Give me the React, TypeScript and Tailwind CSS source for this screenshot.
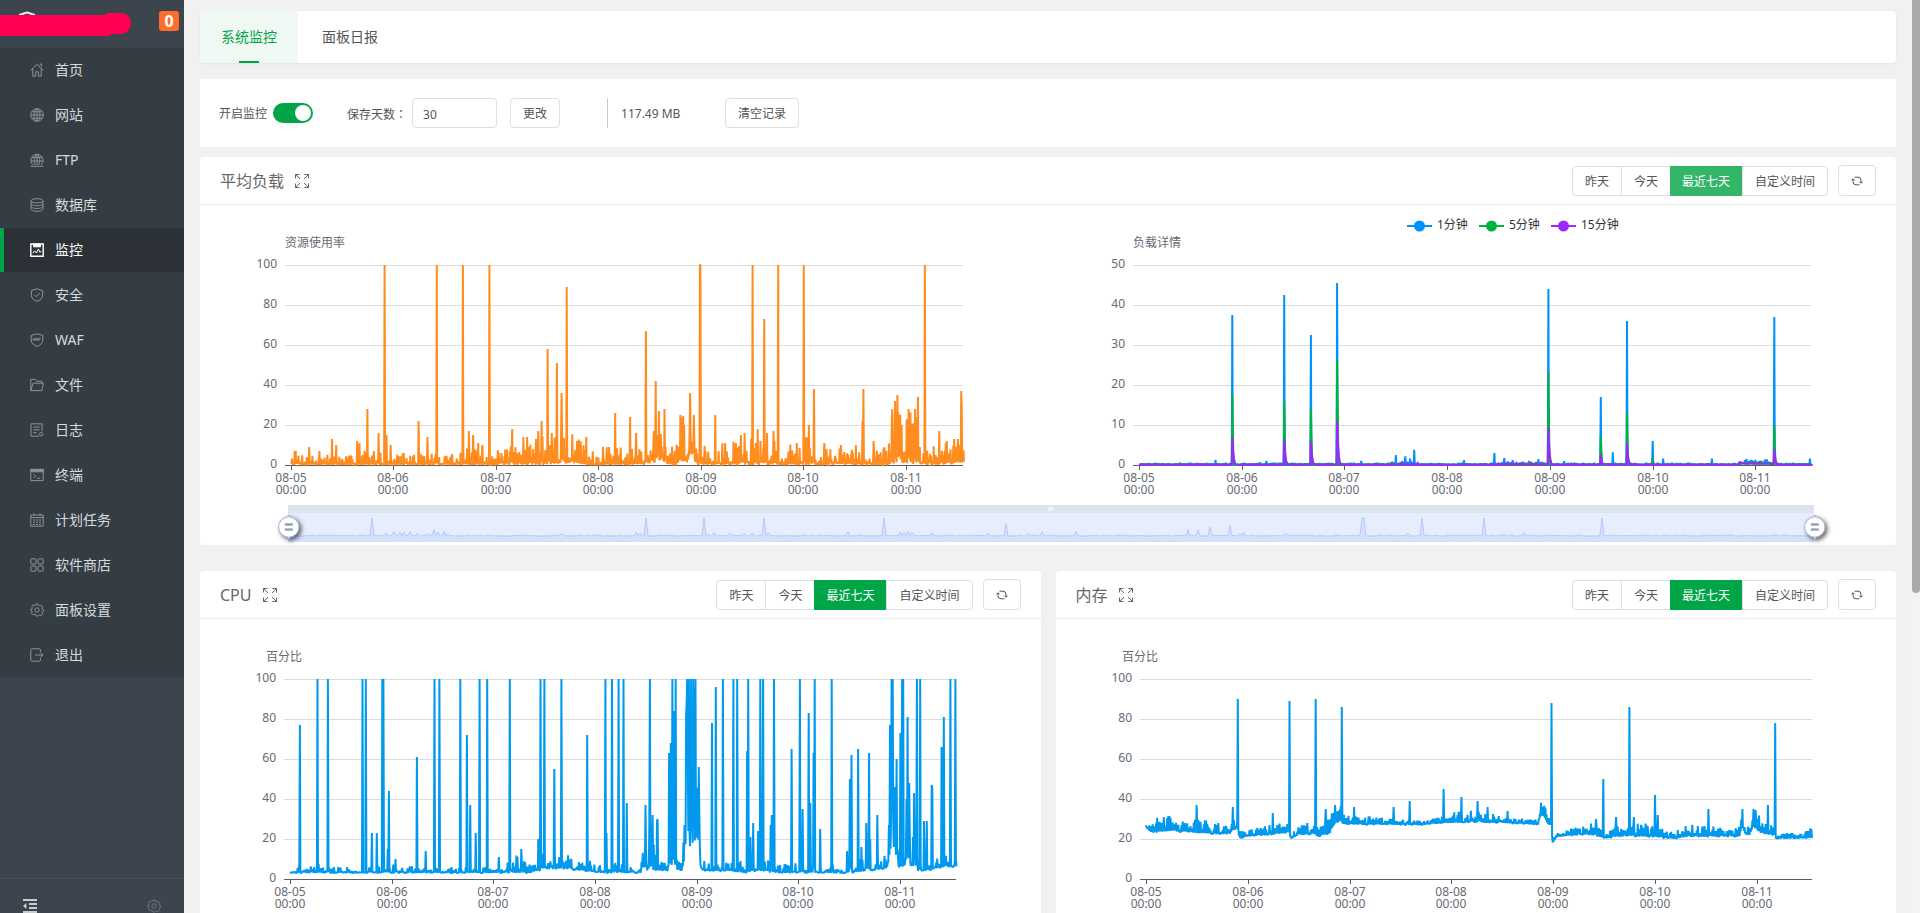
import { useEffect, useRef, useState } from "react";
import type { ReactNode } from "react";

type Point = [number, number];
type Band = [number, number, number];

/* ---------- sidebar ---------- */

const GEAR =
  "M5.9 1h2.2l.4 1.5 1.2.5 1.4-.8 1.5 1.6-.8 1.4.5 1.1 1.2.4v1.6l-1.2.4-.5 1.2.8 1.4-1.5 1.5-1.4-.8-1.2.5L8.1 13H5.9l-.4-1.5-1.2-.5-1.4.8-1.5-1.5.8-1.4-.5-1.2L.7 7.5V6.3l1.2-.4.5-1.1-.8-1.4 1.5-1.6 1.2.8 1.2-.5z";

const ICONS: Record<string, ReactNode> = {
  home: <path d="M.8 7.2 7 1.4l6.2 5.8M2.8 6v7.2h2.8V8.8h2.8v4.4h2.8V6M9.6 1h1.8v2.6" />,
  globe: (
    <>
      <circle cx="7" cy="7" r="6.3" />
      <ellipse cx="7" cy="7" rx="3" ry="6.3" />
      <path d="M7 .7v12.6M.7 7h12.6M1.6 3.8h10.8M1.6 10.2h10.8" />
    </>
  ),
  ftp: (
    <>
      <path d="M3 12A6.100 6.100 0 1 1 11 12M5.400 12C3.400 8.600 3.800 3.600 7 1c3.200 2.600 3.600 7.600 1.600 11M7 1v11M.8 8h12.400M2 4.500h10" />
      <path d="M.5 13.300h13" />
    </>
  ),
  database: (
    <>
      <ellipse cx="7" cy="2.8" rx="6" ry="2.1" />
      <path d="M1 2.8v8.4c0 1.200 2.700 2.100 6 2.100s6-.9 6-2.100V2.800M1 5.600c0 1.200 2.700 2.100 6 2.100s6-.9 6-2.100M1 8.400c0 1.200 2.700 2.100 6 2.100s6-.9 6-2.100" />
    </>
  ),
  monitor: (
    <>
      <path d="M.8 1h12.4v12.200H.8z" strokeWidth="1.4" />
      <path d="M3.500 1h7v2.800h-7z" fill="currentColor" />
      <path d="m2.600 10.200 2-2.400 1.800 2.200 2-4 1.600 3.400 1.600-1.600" />
    </>
  ),
  shield: (
    <>
      <path d="m7 .8 5.600 1.800v4.600c0 3-2.400 5-5.600 6.200-3.200-1.200-5.600-3.200-5.600-6.200V2.600z" />
      <path d="m4.400 6.800 2 2 3.400-3.600" />
    </>
  ),
  waf: (
    <>
      <path d="m7 .8 5.800 1.600v4.800c0 3-2.600 5-5.800 6.200C3.800 12.200 1.200 10.200 1.200 7.200V2.400z" />
      <path d="m3 5 .7 2.600.7-2 .7 2L5.800 5m.4 2.600L7 5l.9 2.600M6.500 6.900h1M8.800 7.800V5h2M8.800 6.400h1.600" strokeWidth=".8" />
    </>
  ),
  folder: <path d="M.8 12.600V1.400h4.400l1.400 1.800h5.200v2M.8 12.600 3 5.200h10.400l-1.600 7.400z" />,
  log: (
    <>
      <path d="M9 13.200H1V.8h11v7.400M3.400 4h6.200M3.400 6.800h6.200M3.400 9.600h3.200" />
      <circle cx="11.2" cy="11.2" r="1.700" />
    </>
  ),
  terminal: (
    <>
      <path d="M.8 1.400h12.400v11.200H.8z" />
      <path d="M.8 1.400h12.400v2.400H.8z" fill="currentColor" />
      <path d="m3.600 6 2 2-2 2M7 10.200h3.200" />
    </>
  ),
  calendar: (
    <>
      <path d="M.8 2h12.400v11.200H.8zM.8 4.600h12.400M4 .4v2.400M10 .4v2.400" />
      <path d="M3 7h8M3 9.200h8M3 11.400h8" strokeDasharray="2 1" />
    </>
  ),
  apps: (
    <>
      <rect x=".8" y=".8" width="5.200" height="5.200" rx="1" />
      <rect x="8" y=".8" width="5.200" height="5.200" rx="1" />
      <rect x=".8" y="8" width="5.200" height="5.200" rx="1" />
      <rect x="8" y="8" width="5.200" height="5.200" rx="1" />
    </>
  ),
  gear: (
    <>
      <path d={GEAR} />
      <circle cx="7" cy="7" r="2.200" />
    </>
  ),
  exit: <path d="M10.400 4V1.800q0-1-1-1H1.800q-1 0-1 1v10.400q0 1 1 1h7.600q1 0 1-1V10M5 7h8M10.600 4.600 13 7l-2.400 2.400" />,
};

const MENU = [
  { icon: "home", label: "首页" },
  { icon: "globe", label: "网站" },
  { icon: "ftp", label: "FTP" },
  { icon: "database", label: "数据库" },
  { icon: "monitor", label: "监控" },
  { icon: "shield", label: "安全" },
  { icon: "waf", label: "WAF" },
  { icon: "folder", label: "文件" },
  { icon: "log", label: "日志" },
  { icon: "terminal", label: "终端" },
  { icon: "calendar", label: "计划任务" },
  { icon: "apps", label: "软件商店" },
  { icon: "gear", label: "面板设置" },
  { icon: "exit", label: "退出" },
];

function MenuIcon({ name }: { name: string }) {
  return (
    <svg viewBox="0 0 14 14" className="size-3.5 shrink-0" fill="none" stroke="currentColor" strokeWidth="1">
      {ICONS[name]}
    </svg>
  );
}

function Sidebar() {
  return (
    <aside className="flex w-[184px] shrink-0 flex-col bg-[#3c444d]">
      <div className="flex h-12 items-start justify-between pr-[5px]">
        <svg width="140" height="48" viewBox="0 0 140 48">
          <path d="M19 15c3-.5 5-2 8-2.500 3 .5 5 2 8 2.500" fill="none" stroke="#e8eaec" strokeWidth="2" />
          <path d="M0 15h104l4-2h13c6 0 10 5 10 10s-4 11-10 11h-9l-3 2H0z" fill="#ff0052" />
        </svg>
        <span className="mt-[11px] flex size-5 items-center justify-center rounded-[3px] bg-[#ff6c2c] text-base font-bold text-white">
          0
        </span>
      </div>
      <nav className="flex flex-col gap-px bg-[#353d44]">
        {MENU.map((item) => {
          const active = item.label === "监控";
          return (
            <a
              key={item.label}
              href="#"
              className={
                active
                  ? "flex h-11 items-center gap-[11px] border-l-4 border-[#00a547] bg-[#2c3138] pl-[26px] text-sm text-white"
                  : "flex h-11 items-center gap-[11px] border-l-4 border-transparent pl-[26px] text-sm text-[#d8d9da]"
              }
            >
              <span className={active ? "text-white" : "text-[#8f9396]"}>
                <MenuIcon name={item.icon} />
              </span>
              {item.label}
            </a>
          );
        })}
      </nav>
      <div className="mt-auto flex h-[35px] items-end justify-between border-t border-[#454e57] px-[23px]">
        <button type="button" aria-label="收起菜单" className="text-[#c9ccce]">
          <svg viewBox="0 0 14 14" className="block size-3.5" fill="currentColor">
            <path d="M0 0h14v2H0zM6 4h8v2H6zM6 8h8v2H6zM0 12h14v2H0zM3.400 4v6L0 7z" />
          </svg>
        </button>
        <button type="button" aria-label="设置" className="text-[#6f767c]">
          <MenuIcon name="gear" />
        </button>
      </div>
    </aside>
  );
}

/* ---------- data ---------- */

function seeded(seed: number) {
  let s = seed;
  return () => {
    s = (s * 1664525 + 1013904223) % 4294967296;
    return s / 4294967296;
  };
}

// Noise swinging between the low and high edge of the band, with single peaks on top.
function buildSeries(length: number, bands: Band[], peaks: Point[], seed: number, skew = 1.8) {
  const rand = seeded(seed);
  const out: number[] = [];
  let b = 0;
  for (let i = 0; i <= length; i++) {
    while (b < bands.length - 2 && i > bands[b + 1][0]) b++;
    const [x0, lo0, hi0] = bands[b];
    const [x1, lo1, hi1] = bands[b + 1];
    const t = Math.min(1, Math.max(0, (i - x0) / (x1 - x0)));
    const lo = lo0 + (lo1 - lo0) * t;
    const hi = hi0 + (hi1 - hi0) * t;
    const r = rand();
    out.push(lo + (hi - lo) * (i % 2 ? r * 0.15 : Math.pow(r, skew)));
  }
  peaks.forEach(([i, v]) => {
    out[i] = v;
  });
  return out;
}

const USAGE = buildSeries(
  1445,
  [[0, 0, 8], [40, 0, 6], [130, 0, 5], [140, 0, 9], [220, 0, 6], [330, 0, 7], [400, 0, 9], [440, 0, 7], [490, 0, 12], [530, 0, 16], [600, 1, 17], [640, 0, 9], [750, 0, 9], [775, 1, 13], [790, 2, 20], [815, 0, 8], [830, 0, 18], [836, 2, 30], [850, 1, 22], [862, 4, 30], [872, 0, 12], [960, 0, 12], [1020, 0, 15], [1060, 0, 9], [1110, 0, 17], [1125, 0, 9], [1270, 0, 8], [1285, 0, 14], [1291, 0, 34], [1306, 2, 34], [1314, 1, 18], [1325, 0, 26], [1345, 1, 32], [1356, 0, 7], [1380, 0, 10], [1445, 1, 15]],
  [[8, 7], [39, 9], [61, 7], [88, 13], [97, 10], [142, 12], [147, 11], [164, 28], [188, 16], [201, 100], [205, 15], [214, 10], [274, 22], [293, 14], [313, 100], [369, 100], [382, 17], [391, 15], [402, 11], [411, 10], [426, 100], [475, 18], [499, 14], [507, 14], [531, 17], [538, 22], [551, 58], [571, 51], [581, 36], [592, 89], [614, 12], [634, 14], [683, 9], [696, 26], [728, 24], [741, 16], [762, 67], [779, 17], [783, 42], [790, 27], [802, 28], [836, 25], [844, 20], [857, 36], [865, 25], [878, 100], [879, 100], [911, 25], [932, 11], [955, 11], [966, 15], [974, 16], [991, 100], [1002, 18], [1016, 73], [1022, 16], [1036, 17], [1046, 100], [1101, 100], [1112, 20], [1123, 38], [1145, 11], [1181, 10], [1213, 10], [1227, 22], [1229, 38], [1251, 12], [1291, 28], [1297, 32], [1302, 35], [1311, 20], [1326, 28], [1340, 28], [1346, 34], [1361, 100], [1392, 17], [1408, 12], [1432, 13], [1439, 37], [1440, 30]],
  7
);

const LOAD_PEAKS: [number, number, number, number][] = [
  [178, 37.5, 17.5, 7], [277, 42.5, 16, 6.5], [328, 32.5, 14, 6], [378, 45.5, 26, 11], [781, 44, 23, 9.5], [881, 17, 7, 2.5], [931, 36, 13, 5.5], [980, 6, 1.5, 0.5], [1212, 37, 10, 4],
];
const LOAD_BUMPS: Point[] = [
  [146, 1.3], [243, 1], [424, 1], [490, 2.5], [508, 2.2], [517, 1.6], [525, 3.8], [620, 1.2], [678, 3], [697, 1.7], [713, 1.2], [744, 1], [762, 1.5], [811, 1], [904, 3.2], [1000, 1.6], [1093, 1.6], [1159, 1.5], [1198, 1.4], [1280, 1.6],
];
const LOAD_BANDS: Band[] = [
  [0, 0, 0.6], [470, 0, 0.6], [480, 0, 1], [530, 0, 1], [540, 0, 0.5], [680, 0, 0.6], [700, 0.1, 0.9], [770, 0.1, 1], [790, 0, 0.6], [1140, 0, 0.6], [1150, 0.3, 1.3], [1200, 0.3, 1.4], [1220, 0, 0.6], [1284, 0, 0.7],
];

const LOAD_1 = buildSeries(1284, LOAD_BANDS, [...LOAD_BUMPS, ...LOAD_PEAKS.map((p): Point => [p[0], p[1]])], 11);
const LOAD_5 = buildSeries(
  1284,
  LOAD_BANDS.map(([i, lo, hi]): Band => [i, lo, hi * 0.8]),
  LOAD_PEAKS.flatMap((p): Point[] => [[p[0], p[2]], [p[0] + 1, p[2] * 0.5], [p[0] + 2, p[2] * 0.2]]),
  12
);
const LOAD_15 = buildSeries(
  1284,
  LOAD_BANDS.map(([i, lo, hi]): Band => [i, lo, hi * 0.6]),
  LOAD_PEAKS.flatMap((p): Point[] => [0, 1, 2, 3, 4, 5].map((k): Point => [p[0] + k, p[3] * Math.pow(0.62, k)])),
  13
);

const CPU = buildSeries(
  1214,
  [[0, 3, 6], [50, 3, 8], [100, 3, 6], [150, 3, 6], [190, 3, 8], [230, 3, 6], [390, 3, 6], [398, 3, 12], [425, 3, 12], [435, 3, 8], [450, 4, 13], [470, 5, 14], [500, 5, 15], [530, 4, 10], [570, 3, 9], [638, 3, 8], [642, 4, 30], [660, 4, 30], [668, 4, 9], [688, 4, 9], [690, 5, 70], [702, 5, 85], [704, 4, 14], [714, 4, 12], [717, 8, 50], [722, 15, 100], [741, 15, 100], [746, 5, 30], [750, 4, 10], [800, 4, 8], [830, 3, 10], [860, 4, 10], [880, 3, 12], [900, 3, 8], [940, 3, 8], [1010, 3, 7], [1015, 3, 25], [1023, 3, 20], [1026, 3, 8], [1048, 4, 12], [1054, 4, 16], [1058, 4, 9], [1088, 5, 13], [1092, 12, 60], [1105, 10, 50], [1108, 6, 12], [1120, 6, 14], [1122, 8, 50], [1140, 4, 40], [1143, 4, 9], [1160, 4, 9], [1190, 6, 12], [1214, 6, 12]],
  [[18, 77], [50, 100], [69, 100], [132, 100], [138, 100], [149, 23], [158, 23], [168, 100], [170, 100], [178, 15], [180, 44], [192, 10], [231, 61], [247, 14], [263, 100], [272, 100], [310, 100], [322, 72], [328, 37], [338, 23], [345, 100], [359, 100], [380, 11], [400, 100], [421, 15], [452, 20], [456, 100], [463, 100], [481, 55], [494, 100], [541, 72], [574, 100], [576, 23], [586, 100], [598, 100], [607, 100], [613, 38], [647, 37], [655, 100], [660, 32], [668, 29], [669, 30], [690, 63], [693, 68], [696, 100], [699, 84], [702, 100], [721, 82], [723, 100], [726, 100], [730, 100], [734, 100], [738, 100], [745, 33], [768, 78], [775, 96], [788, 100], [807, 100], [814, 100], [832, 64], [834, 100], [838, 21], [843, 28], [852, 24], [856, 100], [861, 100], [875, 27], [877, 32], [881, 100], [913, 65], [928, 100], [933, 35], [944, 83], [947, 38], [953, 63], [955, 100], [965, 25], [986, 100], [1019, 50], [1022, 62], [1034, 65], [1040, 16], [1049, 28], [1054, 63], [1056, 20], [1069, 32], [1092, 77], [1095, 100], [1097, 100], [1101, 46], [1104, 60], [1111, 73], [1114, 100], [1116, 100], [1122, 40], [1124, 81], [1127, 48], [1136, 43], [1141, 100], [1147, 100], [1154, 29], [1159, 29], [1168, 47], [1169, 45], [1186, 66], [1190, 81], [1202, 100], [1211, 100]],
  21
);

const MEMORY = buildSeries(
  1199,
  [[0, 26, 29], [10, 23, 27], [20, 23, 31], [45, 24, 32], [60, 23, 30], [150, 22, 29], [160, 25, 33], [165, 24, 30], [168, 20, 24], [180, 21, 24], [230, 22, 28], [257, 23, 29], [260, 20, 22], [275, 22, 27], [304, 22, 29], [310, 21, 25], [330, 22, 32], [340, 28, 35], [350, 28, 37], [360, 27, 32], [420, 27, 31], [500, 27, 29], [540, 28, 33], [600, 28, 35], [640, 28, 31], [705, 27, 30], [709, 31, 39], [718, 30, 38], [722, 27, 31], [728, 27, 30], [731, 18, 20], [738, 21, 23], [780, 22, 27], [800, 22, 28], [825, 20, 24], [850, 21, 27], [900, 21, 28], [950, 20, 23], [970, 21, 28], [1060, 21, 26], [1067, 21, 28], [1072, 26, 36], [1078, 22, 28], [1085, 22, 27], [1092, 26, 36], [1100, 24, 33], [1110, 22, 30], [1130, 22, 27], [1133, 20, 22], [1199, 20, 26]],
  [[32, 31], [91, 37], [156, 36], [165, 90], [228, 33], [258, 89], [305, 90], [323, 35], [340, 37], [352, 86], [374, 36], [445, 36], [474, 39], [535, 45], [567, 41], [596, 39], [614, 36], [650, 34], [729, 88], [809, 30], [822, 50], [845, 31], [869, 86], [877, 31], [915, 42], [920, 32], [1011, 35], [1072, 35], [1092, 35], [1118, 37], [1131, 78]],
  31,
  0.9
);

const OVERVIEW = buildSeries(
  763,
  [[0, 0, 0.08], [763, 0, 0.08]],
  [[42, 1], [49, 0.17], [53, 0.25], [56, 0.22], [58, 0.2], [61, 0.25], [65, 0.12], [70, 0.14], [73, 0.35], [75, 0.22], [78, 0.27], [80, 0.13], [137, 0.12], [174, 0.2], [176, 0.16], [179, 1], [208, 1], [210, 0.14], [213, 0.2], [221, 0.15], [228, 0.14], [232, 0.18], [238, 1], [240, 0.18], [280, 0.23], [298, 1], [306, 0.22], [308, 0.2], [310, 0.28], [312, 0.2], [322, 0.2], [350, 0.16], [359, 0.67], [370, 0.14], [377, 0.24], [394, 0.24], [450, 0.35], [455, 0.35], [461, 0.5], [471, 0.6], [476, 0.15], [478, 0.2], [499, 0.14], [537, 1], [538, 1], [560, 0.16], [567, 1], [598, 1], [608, 0.13], [618, 0.2], [657, 1], [748, 0.1]],
  41
);

/* ---------- charts ---------- */

const DAYS = ["08-05", "08-06", "08-07", "08-08", "08-09", "08-10", "08-11"];
const PLOT_HEIGHT = 200;

interface Series {
  values: number[];
  color: string;
}

interface PlotProps {
  x: number;
  y: number;
  width: number;
  name: string;
  nameAnchor: "start" | "middle";
  max: number;
  ticks: number[];
  samplesPerDay: number;
  series: Series[];
}

function Plot({ x, y, width, name, nameAnchor, max, ticks, samplesPerDay, series }: PlotProps) {
  const start = 6;
  const span = width - start + 1;
  const bottom = PLOT_HEIGHT;
  return (
    <g transform={`translate(${Math.round(x)} ${y})`} fontSize="12" fill="#666a73">
      <text x="0" y="-18" textAnchor={nameAnchor}>
        {name}
      </text>
      {ticks.map((t) => {
        const ty = bottom - (t / max) * bottom;
        return (
          <g key={t}>
            {t > 0 && <path d={`M0 ${ty + 0.5}H${width}`} stroke="#dcdcdc" />}
            <text x="-8" y={ty + 3} textAnchor="end">
              {t}
            </text>
          </g>
        );
      })}
      <path d={`M0 ${bottom + 0.5}H${width}`} stroke="#5c5e66" />
      {DAYS.map((day, i) => {
        const tx = Math.round(start + (i * span * samplesPerDay) / (series[0].values.length - 1));
        return (
          <g key={day}>
            <path d={`M${tx + 0.5} ${bottom}v5`} stroke="#5c5e66" />
            <text textAnchor="middle">
              <tspan x={tx} y={bottom + 17}>
                {day}
              </tspan>
              <tspan x={tx} dy="12">
                00:00
              </tspan>
            </text>
          </g>
        );
      })}
      {series.map((s) => {
        const step = span / (s.values.length - 1);
        const d = s.values
          .map((v, i) => `${(start + i * step).toFixed(1)} ${(bottom - (v / max) * bottom).toFixed(1)}`)
          .join("L");
        return (
          <path key={s.color} d={`M${d}`} fill="none" stroke={s.color} strokeWidth="2" strokeLinejoin="bevel" />
        );
      })}
    </g>
  );
}

function useWidth(initial: number) {
  const ref = useRef<HTMLDivElement>(null);
  const [width, setWidth] = useState(initial);
  useEffect(() => {
    if (!ref.current) return;
    const observer = new ResizeObserver(([entry]) => setWidth(entry.contentRect.width));
    observer.observe(ref.current);
    return () => observer.disconnect();
  }, []);
  return { ref, width };
}

const LEGEND = [
  { label: "1分钟", color: "#0191ff", x: 0 },
  { label: "5分钟", color: "#00b23f", x: 72 },
  { label: "15分钟", color: "#9c28fb", x: 144 },
];

function SliderHandle({ x }: { x: number }) {
  return (
    <g transform={`translate(${x - 10} ${299}) scale(1.08)`}>
      <path
        d="M10.700 11.900v-1.300H9.300v1.300c-4.900.3-8.800 4.400-8.800 9.400 0 5 3.900 9.100 8.800 9.400v1.300h1.300v-1.300c4.900-.3 8.800-4.400 8.800-9.400 0-5-3.900-9.100-8.700-9.400zM13.300 24.400H6.700V23h6.600zM13.300 19.600H6.700v-1.400h6.600z"
        fill="#fff"
        stroke="#acb8d1"
        className="drop-shadow-[2px_2px_2px_rgba(0,0,0,0.6)]"
      />
    </g>
  );
}

function ZoomSlider({ x, width }: { x: number; width: number }) {
  const step = width / (OVERVIEW.length - 1);
  const line = OVERVIEW.map((v, i) => `${(x + i * step).toFixed(1)} ${(331 - v * 18).toFixed(1)}`).join("L");
  const mid = Math.round(x + width / 2);
  return (
    <g>
      <rect x={x} y="300" width={width} height="8" fill="#dde4f0" />
      <rect x={x} y="308" width={width} height="29" fill="#e6eefe" />
      <path d={`M${line}V337H${x}Z`} fill="#d4e1fc" />
      <path d={`M${line}`} fill="none" stroke="#b3cbf8" />
      <path d={`M${mid - 2} 302v4M${mid} 302v4M${mid + 2} 302v4`} stroke="#fff" />
      <SliderHandle x={x} />
      <SliderHandle x={x + width} />
    </g>
  );
}

function LoadChart() {
  const { ref, width } = useWidth(1696);
  const plotWidth = Math.round(width * 0.4);
  return (
    <div ref={ref}>
      <svg width="100%" height="340" className="block">
        <g transform={`translate(${width - 489} 21)`} fontSize="12" fill="#333">
          {LEGEND.map((item) => (
            <g key={item.label} transform={`translate(${item.x} 0)`}>
              <path d="M0 0h25" stroke={item.color} strokeWidth="2" />
              <circle cx="12.5" cy="0" r="5.500" fill={item.color} />
              <text x="30" y="3">
                {item.label}
              </text>
            </g>
          ))}
        </g>
        <Plot
          x={width * 0.05}
          y={60}
          width={plotWidth}
          name="资源使用率"
          nameAnchor="start"
          max={100}
          ticks={[0, 20, 40, 60, 80, 100]}
          samplesPerDay={220}
          series={[{ values: USAGE, color: "#ff8c1f" }]}
        />
        <Plot
          x={width * 0.55}
          y={60}
          width={plotWidth}
          name="负载详情"
          nameAnchor="start"
          max={50}
          ticks={[0, 10, 20, 30, 40, 50]}
          samplesPerDay={196}
          series={[
            { values: LOAD_1, color: "#0191ff" },
            { values: LOAD_5, color: "#00b23f" },
            { values: LOAD_15, color: "#9c28fb" },
          ]}
        />
        <ZoomSlider x={88} width={Math.round(width * 0.9)} />
      </svg>
    </div>
  );
}

function PercentChart({ values, samplesPerDay }: { values: number[]; samplesPerDay: number }) {
  const { ref, width } = useWidth(840);
  return (
    <div ref={ref}>
      <svg width="100%" height="340" className="block">
        <Plot
          x={width * 0.1}
          y={60}
          width={Math.round(width * 0.8)}
          name="百分比"
          nameAnchor="middle"
          max={100}
          ticks={[0, 20, 40, 60, 80, 100]}
          samplesPerDay={samplesPerDay}
          series={[{ values, color: "#0099ee" }]}
        />
      </svg>
    </div>
  );
}

/* ---------- cards ---------- */

const RANGES = ["昨天", "今天", "最近七天", "自定义时间"];

function ChartCard({ title, hovered, children }: { title: string; hovered?: boolean; children: ReactNode }) {
  return (
    <section className="min-w-0 rounded bg-white">
      <header className="flex h-12 items-center justify-between border-b border-[#ececec] px-5">
        <div className="flex items-center gap-2.5 text-[#666]">
          <h2 className="text-base">{title}</h2>
          <button type="button" aria-label="全屏">
            <svg viewBox="0 0 16 16" className="block size-4" fill="none" stroke="currentColor" strokeWidth="1">
              <path d="M1.500 5.500v-4h4M10.500 1.500h4v4M14.500 10.500v4h-4M5.500 14.500h-4v-4M1.500 1.500l4.500 4.500M14.500 1.500 10 6M14.500 14.500 10 10M1.500 14.500 6 10" />
            </svg>
          </button>
        </div>
        <div className="flex items-center gap-2.5">
          <div className="flex text-xs text-[#555]">
            {RANGES.map((range, i) => {
              if (range === "最近七天") {
                return (
                  <button
                    key={range}
                    type="button"
                    className={
                      hovered
                        ? "h-[30px] bg-[#33b669] px-3 pt-0.5 text-white"
                        : "h-[30px] bg-[#00a547] px-3 pt-0.5 text-white"
                    }
                  >
                    {range}
                  </button>
                );
              }
              return (
                <button
                  key={range}
                  type="button"
                  className={
                    i === 0
                      ? "h-[30px] rounded-l border border-[#dcdfe6] px-3 pt-0.5"
                      : i === 1
                        ? "h-[30px] border-y border-[#dcdfe6] px-3 pt-0.5"
                        : "h-[30px] rounded-r border border-[#dcdfe6] px-3 pt-0.5"
                  }
                >
                  {range}
                </button>
              );
            })}
          </div>
          <button
            type="button"
            aria-label="刷新"
            className="flex h-[31px] w-[38px] items-center justify-center rounded border border-[#dcdfe6] text-[#555]"
          >
            <svg viewBox="0 0 12 12" className="size-3" fill="none" stroke="currentColor" strokeWidth="1">
              <path d="M3.500 2.200h3.500a3 3 0 0 1 3 3V8M8.500 9.800H5a3 3 0 0 1-3-3V4M8.300 6.600 10 8.300l1.500-1.700M.5 5.400 2 3.700l1.700 1.700" />
            </svg>
          </button>
        </div>
      </header>
      {children}
    </section>
  );
}

export default function App() {
  const [enabled, setEnabled] = useState(true);
  const [days, setDays] = useState("30");

  return (
    <div className="flex h-screen overflow-hidden bg-[#f1f1f1] font-['Noto_Sans','Noto_Sans_CJK_SC',sans-serif] text-[#555]">
      <Sidebar />

      <main className="min-w-0 flex-1 overflow-hidden px-4 pt-[11px]">
        <div className="flex h-[52px] rounded bg-white text-sm shadow-sm shadow-black/5">
          <a href="#" className="flex flex-col items-center justify-between rounded-l bg-[#eff8f3] px-[21px] pt-4 text-[#00a547]">
            <span className="leading-5">系统监控</span>
            <span className="h-0.5 w-5 bg-[#00a547]" />
          </a>
          <a href="#" className="px-6 pt-4 leading-5">
            面板日报
          </a>
        </div>

        <div className="mt-4 flex h-[68px] items-center bg-white px-[19px] text-xs">
          <label className="flex items-center gap-1.5">
            <span className="pt-0.5">开启监控</span>
            <input
              type="checkbox"
              checked={enabled}
              onChange={(e) => setEnabled(e.target.checked)}
              className="peer sr-only"
            />
            <span className="flex h-5 w-10 items-center justify-start rounded-full bg-[#dcdfe6] p-0.5 peer-checked:justify-end peer-checked:bg-[#00a547]">
              <span className="size-4 rounded-full bg-white" />
            </span>
          </label>
          <label htmlFor="days" className="ml-[34px] pt-0.5">
            保存天数<span className="font-['Noto_Sans_CJK_TC',sans-serif]">：</span>
          </label>
          <input
            id="days"
            value={days}
            onChange={(e) => setDays(e.target.value)}
            className="ml-[5px] h-[30px] w-[85px] rounded border border-[#dcdfe6] px-2.5 pt-0.5"
          />
          <button type="button" className="ml-[13px] h-[30px] rounded border border-[#dcdfe6] px-3 pt-0.5">
            更改
          </button>
          <span className="ml-[47px] flex h-[30px] w-[118px] items-center border-l border-[#ccc] pt-0.5 pl-[13px]">
            117.49 MB
          </span>
          <button type="button" className="h-[30px] rounded border border-[#dcdfe6] px-3 pt-0.5">
            清空记录
          </button>
        </div>

        <div className="mt-2.5">
          <ChartCard title="平均负载" hovered>
            <LoadChart />
          </ChartCard>
        </div>

        <div className="mt-[26px] grid grid-cols-2 gap-[15px]">
          <ChartCard title="CPU">
            <PercentChart values={CPU} samplesPerDay={185} />
          </ChartCard>
          <ChartCard title="内存">
            <PercentChart values={MEMORY} samplesPerDay={183} />
          </ChartCard>
        </div>
      </main>

      <div className="w-2 shrink-0 bg-[#f3f3f3]">
        <div className="h-[65%] rounded-b-full bg-[#a9a9a9]" />
      </div>
    </div>
  );
}
